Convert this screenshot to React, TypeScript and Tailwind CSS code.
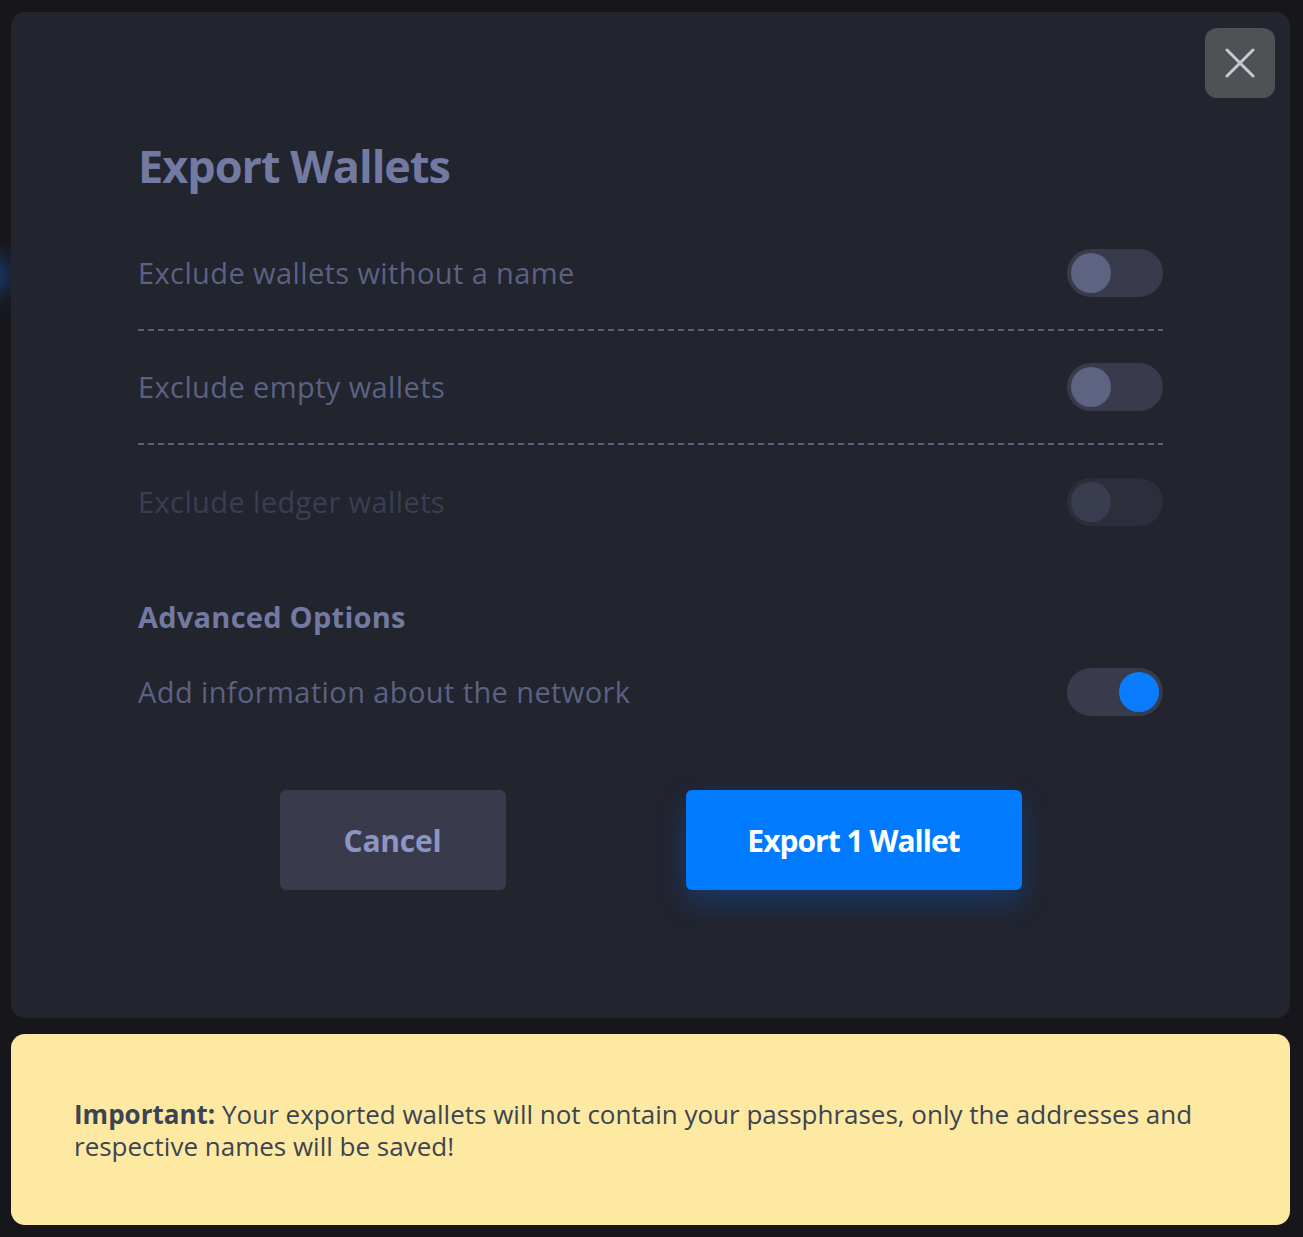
import { useState } from 'react';

const font = { fontFamily: '"Open Sans", Lato, sans-serif' };

interface ToggleProps {
  on: boolean;
  disabled?: boolean;
  onChange?: () => void;
}

function Toggle({ on, disabled, onChange }: ToggleProps) {
  const track = disabled ? 'bg-[#2c2e3b]' : 'bg-[#393b4d]';
  const knob = on ? 'bg-[#0a7cff] translate-x-[48px]' : disabled ? 'bg-[#3a3d50]' : 'bg-[#5e6382]';
  return (
    <button
      type="button"
      disabled={disabled}
      onClick={onChange}
      className={`flex h-[48px] w-[96px] shrink-0 items-center rounded-full px-[4px] ${track}`}
    >
      <span className={`block h-[40px] w-[40px] rounded-full transition-transform ${knob}`} />
    </button>
  );
}

function Dashed() {
  return (
    <div className="h-[2px] w-full bg-[repeating-linear-gradient(90deg,#5b5f7c_0_6px,transparent_6px_10px)]" />
  );
}

export default function App() {
  const [noName, setNoName] = useState(false);
  const [empty, setEmpty] = useState(false);
  const [network, setNetwork] = useState(true);

  return (
    <div className="relative min-h-screen overflow-hidden bg-[#17171b] pb-[12px] pl-[11px] pr-[13px] pt-[12px]" style={font}>
      <div className="absolute left-[-20px] top-[255px] h-[40px] w-[30px] rounded-full bg-[#1b3a6e] blur-[10px]" />

      <div className="relative h-[1006px] rounded-[14px] bg-[#22242e] px-[127px] pt-[124px]">
        <button
          type="button"
          className="absolute right-[15px] top-[16px] flex h-[70px] w-[70px] items-center justify-center rounded-[12px] bg-[#505155]"
        >
          <svg width="30" height="30" viewBox="0 0 30 30" fill="none">
            <path d="M2 2L28 28M28 2L2 28" stroke="#c3cbd5" strokeWidth="3" strokeLinecap="round" />
          </svg>
        </button>

        <h1 className="h-[60px] text-[45px] font-bold leading-[60px] tracking-[-1px] text-[#737aa2]">
          Export Wallets
        </h1>

        <div className="mt-[21px]">
          <div className="flex h-[112px] items-center justify-between">
            <span className="text-[29px] tracking-[0.4px] text-[#5c6182]">Exclude wallets without a name</span>
            <Toggle on={noName} onChange={() => setNoName(!noName)} />
          </div>
          <Dashed />
          <div className="flex h-[112px] items-center justify-between">
            <span className="text-[29px] tracking-[0.4px] text-[#5c6182]">Exclude empty wallets</span>
            <Toggle on={empty} onChange={() => setEmpty(!empty)} />
          </div>
          <Dashed />
          <div className="flex h-[114px] items-center justify-between">
            <span className="text-[29px] tracking-[0.4px] text-[#3b3e52]">Exclude ledger wallets</span>
            <Toggle on={false} disabled />
          </div>
        </div>

        <h2 className="mt-[38px] h-[40px] text-[29px] font-bold leading-[40px] tracking-[0.25px] text-[#737aa2]">
          Advanced Options
        </h2>

        <div className="mt-[27px] flex h-[56px] items-center justify-between">
          <span className="text-[29px] tracking-[0.4px] text-[#5c6182]">Add information about the network</span>
          <Toggle on={network} onChange={() => setNetwork(!network)} />
        </div>

        <div className="mt-[70px] flex justify-center gap-[180px]">
          <button
            type="button"
            className="h-[100px] w-[226px] rounded-[6px] bg-[#393b4d] text-[30px] font-bold tracking-[-0.2px] text-[#8c95c3]"
          >
            Cancel
          </button>
          <button
            type="button"
            className="h-[100px] w-[336px] rounded-[6px] bg-[#007bff] text-[30px] font-bold tracking-[-1px] text-white shadow-[0_12px_30px_rgba(0,110,255,0.28)]"
          >
            Export 1 Wallet
          </button>
        </div>
      </div>

      <div className="mt-[16px] flex h-[191px] items-center rounded-[14px] bg-[#fee9a3] pl-[63px] pr-[90px]">
        <p className="text-[26px] leading-[32px] text-[#3b4452]">
          <strong className="font-bold">Important:</strong> Your exported wallets will not contain your passphrases,
          only the addresses and respective names will be saved!
        </p>
      </div>
    </div>
  );
}
